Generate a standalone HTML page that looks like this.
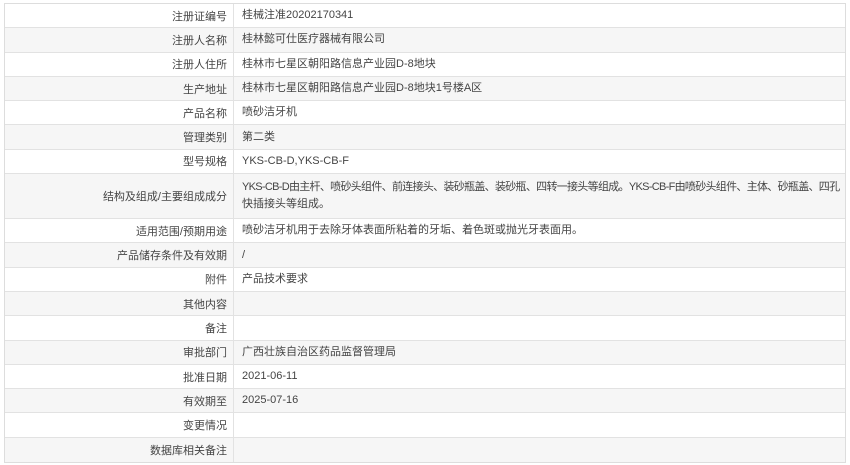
<!DOCTYPE html>
<html><head><meta charset="utf-8"><style>
body{margin:0;background:#fff;font-family:"Liberation Sans","Noto Sans CJK SC",sans-serif;font-size:11px;color:#444}
.t{position:absolute;left:4px;top:3px;width:842px;border:1px solid #ddd;box-sizing:border-box}
.r{display:flex;height:24.3px;border-bottom:1px solid #e2e2e2;box-sizing:border-box}
.r:last-child{border-bottom:none}
.r:nth-child(even){background:#f6f6f6}
.l{width:229px;text-align:right;padding-right:6px;box-sizing:border-box;border-right:1px solid #e2e2e2;display:flex;align-items:center;justify-content:flex-end}
.v{flex:1;padding-left:8px;padding-right:4px;display:flex;align-items:center;line-height:17px;white-space:nowrap;overflow:hidden}
.d{height:45px}
.d .v{display:block;padding-top:5px}
</style></head><body>
<div class="t">
<div class="r"><div class="l">注册证编号</div><div class="v">桂械注准20202170341</div></div>
<div class="r"><div class="l">注册人名称</div><div class="v">桂林懿可仕医疗器械有限公司</div></div>
<div class="r"><div class="l">注册人住所</div><div class="v">桂林市七星区朝阳路信息产业园D-8地块</div></div>
<div class="r"><div class="l">生产地址</div><div class="v">桂林市七星区朝阳路信息产业园D-8地块1号楼A区</div></div>
<div class="r"><div class="l">产品名称</div><div class="v">喷砂洁牙机</div></div>
<div class="r"><div class="l">管理类别</div><div class="v">第二类</div></div>
<div class="r"><div class="l">型号规格</div><div class="v">YKS-CB-D,YKS-CB-F</div></div>
<div class="r d"><div class="l">结构及组成/主要组成成分</div><div class="v"><div style="letter-spacing:-0.7px">YKS-CB-D由主杆、喷砂头组件、前连接头、装砂瓶盖、装砂瓶、四转一接头等组成。YKS-CB-F由喷砂头组件、主体、砂瓶盖、四孔</div><div>快插接头等组成。</div></div></div>
<div class="r"><div class="l">适用范围/预期用途</div><div class="v">喷砂洁牙机用于去除牙体表面所粘着的牙垢、着色斑或抛光牙表面用。</div></div>
<div class="r"><div class="l">产品储存条件及有效期</div><div class="v">/</div></div>
<div class="r"><div class="l">附件</div><div class="v">产品技术要求</div></div>
<div class="r"><div class="l">其他内容</div><div class="v"></div></div>
<div class="r"><div class="l">备注</div><div class="v"></div></div>
<div class="r"><div class="l">审批部门</div><div class="v">广西壮族自治区药品监督管理局</div></div>
<div class="r"><div class="l">批准日期</div><div class="v">2021-06-11</div></div>
<div class="r"><div class="l">有效期至</div><div class="v">2025-07-16</div></div>
<div class="r"><div class="l">变更情况</div><div class="v"></div></div>
<div class="r"><div class="l">数据库相关备注</div><div class="v"></div></div>
</div>
</body></html>
